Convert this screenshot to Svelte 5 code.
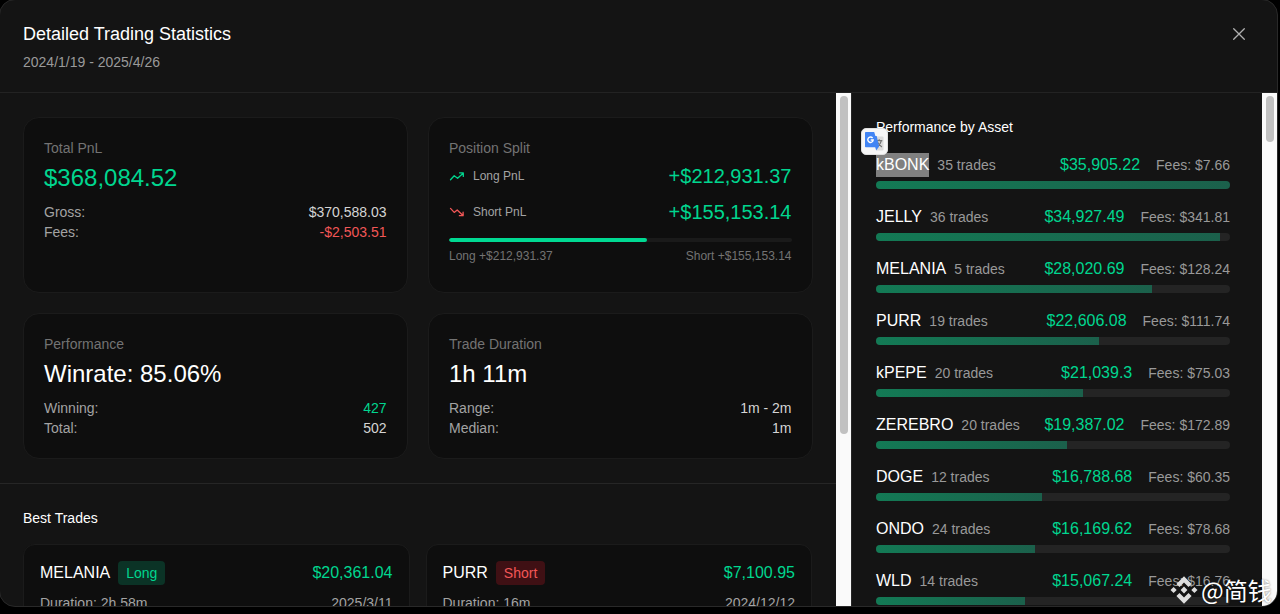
<script lang="ts">
  type Asset = { name: string; trades: number; pnl: number; fees: string };

  const assets: Asset[] = [
    { name: 'kBONK', trades: 35, pnl: 35905.22, fees: '$7.66' },
    { name: 'JELLY', trades: 36, pnl: 34927.49, fees: '$341.81' },
    { name: 'MELANIA', trades: 5, pnl: 28020.69, fees: '$128.24' },
    { name: 'PURR', trades: 19, pnl: 22606.08, fees: '$111.74' },
    { name: 'kPEPE', trades: 20, pnl: 21039.3, fees: '$75.03' },
    { name: 'ZEREBRO', trades: 20, pnl: 19387.02, fees: '$172.89' },
    { name: 'DOGE', trades: 12, pnl: 16788.68, fees: '$60.35' },
    { name: 'ONDO', trades: 24, pnl: 16169.62, fees: '$78.68' },
    { name: 'WLD', trades: 14, pnl: 15067.24, fees: '$16.76' }
  ];

  const bestTrades = [
    { name: 'MELANIA', side: 'Long', pnl: 20361.04, duration: '2h 58m', date: '2025/3/11' },
    { name: 'PURR', side: 'Short', pnl: 7100.95, duration: '16m', date: '2024/12/12' }
  ];

  const longPnl = 212931.37;
  const shortPnl = 155153.14;
  const longShare = (longPnl / (longPnl + shortPnl)) * 100;
  const maxPnl = Math.max(...assets.map((a) => a.pnl));

  let open = $state(true);

  function money(value: number) {
    return '$' + value.toLocaleString('en-US', { maximumFractionDigits: 2 });
  }
</script>

{#if open}
  <div class="modal">
    <header>
      <div>
        <h1>Detailed Trading Statistics</h1>
        <p>2024/1/19 - 2025/4/26</p>
      </div>
      <button class="close" aria-label="Close" onclick={() => (open = false)}>
        <svg width="24" height="24" viewBox="0 0 24 24" fill="none" stroke="currentColor" stroke-width="1.3" stroke-linecap="round">
          <path d="M6.7 6.7 17.3 17.3M17.3 6.7 6.7 17.3" />
        </svg>
      </button>
    </header>

    <div class="body">
      <main>
        <section class="stats">
          <div class="card">
            <h3>Total PnL</h3>
            <div class="value green">$368,084.52</div>
            <div class="row"><span>Gross:</span><b>$370,588.03</b></div>
            <div class="row"><span>Fees:</span><b class="red">-$2,503.51</b></div>
          </div>

          <div class="card">
            <h3>Position Split</h3>
            <div class="split">
              <svg class="green" width="16" height="16" viewBox="0 0 16 16" fill="none" stroke="currentColor" stroke-width="1.3" stroke-linecap="round" stroke-linejoin="round">
                <path d="M1.5 11.8 5.2 7.8 8.6 10.3 14.2 5.2M10.6 4.9h3.7v3.5" />
              </svg>
              <span>Long PnL</span>
              <b class="green">+{money(longPnl)}</b>
            </div>
            <div class="split">
              <svg class="red" width="16" height="16" viewBox="0 0 16 16" fill="none" stroke="currentColor" stroke-width="1.3" stroke-linecap="round" stroke-linejoin="round">
                <path d="M1.5 4.4 5.2 8.4 8.2 6 14 11.4M10.4 11.7h3.7V8.2" />
              </svg>
              <span>Short PnL</span>
              <b class="green">+{money(shortPnl)}</b>
            </div>
            <div class="split-bar"><div style="width: {longShare}%"></div></div>
            <div class="split-legend">
              <span>Long +{money(longPnl)}</span>
              <span>Short +{money(shortPnl)}</span>
            </div>
          </div>

          <div class="card">
            <h3>Performance</h3>
            <div class="value">Winrate: 85.06%</div>
            <div class="row"><span>Winning:</span><b class="green">427</b></div>
            <div class="row"><span>Total:</span><b>502</b></div>
          </div>

          <div class="card">
            <h3>Trade Duration</h3>
            <div class="value">1h 11m</div>
            <div class="row"><span>Range:</span><b>1m - 2m</b></div>
            <div class="row"><span>Median:</span><b>1m</b></div>
          </div>
        </section>

        <section class="best">
          <h2>Best Trades</h2>
          <div class="trades">
            {#each bestTrades as trade}
              <div class="trade">
                <div class="trade-top">
                  <span class="name">{trade.name}</span>
                  <span class="badge {trade.side.toLowerCase()}">{trade.side}</span>
                  <span class="pnl green">{money(trade.pnl)}</span>
                </div>
                <div class="trade-info">
                  <span>Duration: {trade.duration}</span>
                  <span>{trade.date}</span>
                </div>
              </div>
            {/each}
          </div>
        </section>
      </main>
      <div class="scrollbar"><div class="thumb main-thumb"></div></div>

      <aside>
        <h2>Performance by Asset</h2>
        {#each assets as asset, i}
          <div class="asset">
            <div class="asset-line">
              <span class="name" class:selected={i === 0}>{asset.name}</span>
              <span class="muted">{asset.trades} trades</span>
              <span class="pnl green">{money(asset.pnl)}</span>
              <span class="muted fees">Fees: {asset.fees}</span>
            </div>
            <div class="asset-bar"><div style="width: {(asset.pnl / maxPnl) * 100}%"></div></div>
          </div>
        {/each}
      </aside>
      <div class="scrollbar"><div class="thumb aside-thumb"></div></div>
    </div>
  </div>
{/if}

<!-- translate extension button next to the selected text -->
<div class="translate">
  <svg width="19" height="20" viewBox="0 0 19 20">
    <path d="M8 4.5h9.5a1 1 0 0 1 1 1v12a1 1 0 0 1-1 1h-6z" fill="#dcdcdc" />
    <path d="M11 8.7h6.3M14.2 7.3v1.4M16.4 8.7c-.6 2.6-2 4.4-4 5.8M12.6 10.3c1 2 2.3 3.4 4.3 4.6" fill="none" stroke="#747474" stroke-width="1.2" />
    <path d="M.8 0h8.4l1.2 4h1.3l2.4 10.4-2.9 4.2-1-3.4H.8a.8.8 0 0 1-.8-.8V.8A.8.8 0 0 1 .8 0z" fill="#4285f4" />
    <path d="M7.6 6A2.7 2.7 0 1 0 8.2 8H5.7" fill="none" stroke="#fff" stroke-width="1.4" />
  </svg>
</div>

<div class="watermark">
  <svg width="28" height="28" viewBox="0 0 28 28" fill="#dedede">
    <path d="M14 .3 21.6 7.9 18.5 11 14 6.5 9.5 11 6.4 7.9z" />
    <path d="M14 27.7 21.6 20.1 18.5 17 14 21.5 9.5 17 6.4 20.1z" />
    <path d="M14 10.6 17.4 14 14 17.4 10.6 14z" />
    <path d="M3.6 10.9 6.7 14 3.6 17.1.5 14z" />
    <path d="M24.4 10.9 27.5 14 24.4 17.1 21.3 14z" />
  </svg>
  <span>@简钱</span>
</div>

<style>
  :global(body) {
    background: #000;
    overflow: hidden;
    font-family: 'Liberation Sans', Arial, sans-serif;
  }
  h1, h2, h3, p {
    margin: 0;
    font-weight: 400;
  }
  b {
    font-weight: 400;
  }
  .modal {
    box-sizing: border-box;
    width: 1279px;
    height: 608px;
    margin: -1px 0 0 -1px;
    display: flex;
    flex-direction: column;
    border: 1px solid #292929;
    border-radius: 16px;
    background: #141414;
    color: #fff;
    font-size: 14px;
    line-height: 20px;
    overflow: hidden;
  }
  header {
    display: flex;
    justify-content: space-between;
    align-items: flex-start;
    padding: 20px 26px 20px 23px;
    border-bottom: 1px solid #232323;
  }
  h1 {
    font-size: 18px;
    line-height: 28px;
    margin-bottom: 4px;
  }
  header p {
    color: #9a9a9a;
  }
  .close {
    display: flex;
    padding: 0;
    margin-top: 2px;
    border: none;
    background: none;
    color: #b0b0b0;
    cursor: pointer;
  }
  .body {
    flex: 1;
    min-height: 0;
    display: flex;
  }
  main {
    width: 836px;
    overflow: hidden;
  }
  .stats {
    display: grid;
    grid-template-columns: 1fr 1fr;
    gap: 20px 20.5px;
    padding: 24px 23.5px 24px 23px;
    border-bottom: 1px solid #262626;
  }
  .card {
    padding: 20px;
    border: 1px solid #1b1b1b;
    border-radius: 16px;
    background: #0e0e0e;
  }
  h3 {
    font-size: 14px;
    color: #737373;
    margin-bottom: 4px;
  }
  .value {
    font-size: 24px;
    line-height: 32px;
    margin-bottom: 8px;
  }
  .row {
    display: flex;
    justify-content: space-between;
    color: #a3a3a3;
  }
  .row b {
    color: #d4d4d4;
  }
  .green, .row .green {
    color: #00d68f;
  }
  .red, .row .red {
    color: #f25757;
  }
  .split {
    display: flex;
    align-items: center;
    gap: 8px;
    margin-bottom: 8px;
    font-size: 12px;
    color: #a3a3a3;
  }
  .split b {
    margin-left: auto;
    font-size: 20px;
    line-height: 28px;
  }
  .split-bar {
    height: 4px;
    margin-top: 12px;
    border-radius: 2px;
    background: #1a1a1a;
    overflow: hidden;
  }
  .split-bar div {
    height: 100%;
    border-radius: 2px;
    background: #00d992;
  }
  .split-legend {
    display: flex;
    justify-content: space-between;
    padding: 6px 0 8px;
    font-size: 12px;
    line-height: 16px;
    color: #737373;
  }
  .best {
    padding: 24px 24px 24px 23px;
  }
  h2 {
    font-size: 14px;
    line-height: 20px;
    margin-bottom: 16px;
  }
  .trades {
    display: grid;
    grid-template-columns: 1fr 1fr;
    gap: 16px;
  }
  .trade {
    padding: 16px;
    border: 1px solid #1b1b1b;
    border-radius: 12px;
    background: #0e0e0e;
  }
  .trade-top {
    display: flex;
    align-items: center;
    gap: 8px;
    margin-bottom: 8px;
  }
  .name, .pnl {
    font-size: 16px;
    line-height: 24px;
  }
  .pnl {
    margin-left: auto;
  }
  .badge {
    padding: 2px 8px;
    border-radius: 4px;
  }
  .badge.long {
    background: #0b3326;
    color: #00d68f;
  }
  .badge.short {
    background: #3f1014;
    color: #f25757;
  }
  .trade-info {
    display: flex;
    justify-content: space-between;
    color: #a3a3a3;
  }
  .scrollbar {
    box-sizing: border-box;
    width: 15px;
    padding: 3px 3px 3px 4px;
    background: #fafafa;
  }
  .thumb {
    border-radius: 4px;
    background: #c1c1c1;
  }
  .main-thumb {
    height: 338px;
  }
  .aside-thumb {
    height: 46px;
  }
  aside {
    box-sizing: border-box;
    width: 411px;
    padding: 24px 32px 0 24px;
    border-left: 1px solid #262626;
    overflow: hidden;
  }
  .asset {
    margin-bottom: 16px;
  }
  .asset-line {
    display: flex;
    align-items: center;
    gap: 8px;
    margin-bottom: 4px;
  }
  .selected {
    background: #808080;
  }
  .muted {
    color: #999;
  }
  .fees {
    margin-left: 8px;
  }
  .asset-bar {
    height: 8px;
    border-radius: 4px;
    background: #242424;
    overflow: hidden;
  }
  .asset-bar div {
    height: 100%;
    background: linear-gradient(90deg, #137a55, #1b604b);
  }
  .translate {
    position: absolute;
    left: 861px;
    top: 128px;
    box-sizing: border-box;
    width: 27px;
    height: 27px;
    padding: 4px;
    border: 1px solid #e0e0e0;
    border-radius: 5px;
    background: #f7f7f7;
  }
  .translate svg {
    display: block;
    margin: -1px 0 0 -1px;
  }
  .watermark {
    position: absolute;
    left: 1170px;
    top: 574px;
    display: flex;
    align-items: center;
    gap: 3px;
    color: #fff;
    font-family: 'Noto Sans CJK SC', sans-serif;
    font-size: 24px;
    line-height: 32px;
    white-space: nowrap;
    text-shadow: 0 0 2px rgba(0, 0, 0, 0.6);
  }
</style>
